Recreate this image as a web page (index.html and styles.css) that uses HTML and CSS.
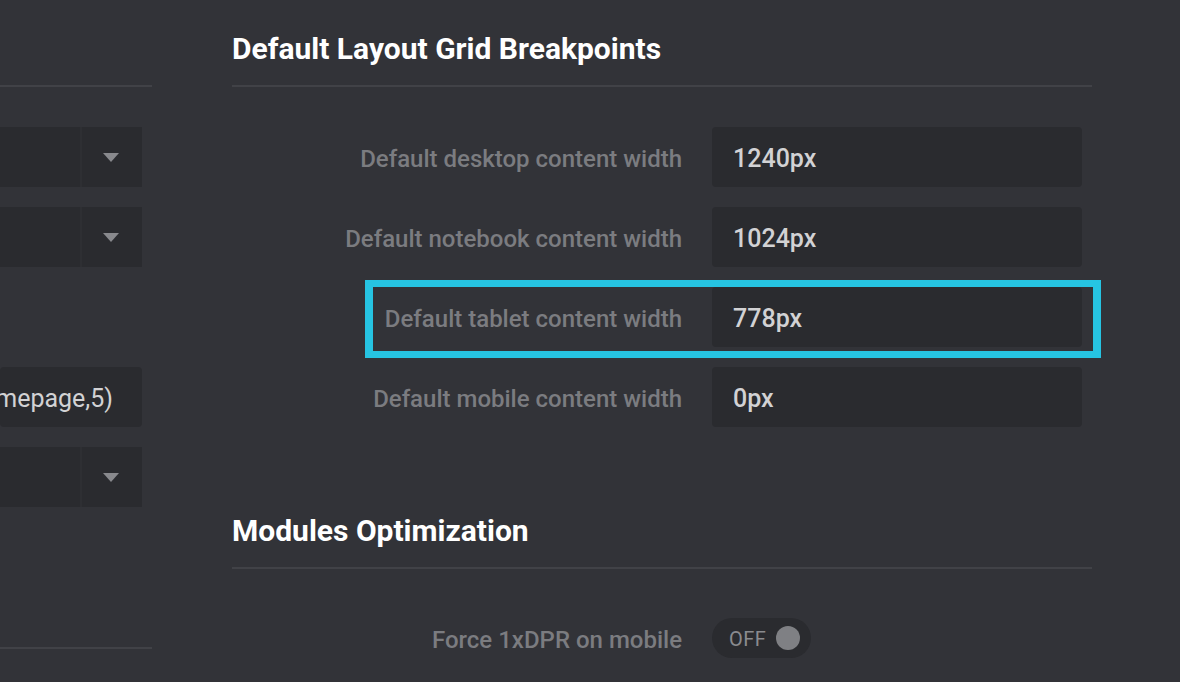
FILE: index.html
```html
<!DOCTYPE html>
<html>
<head>
<meta charset="utf-8">
<link rel="stylesheet" href="styles.css">
</head>
<body>
<div class="page">
  <aside class="side">
    <div class="side-head"></div>
    <div class="side-rows">
      <div class="select"><div class="select-value"></div><div class="select-arrow"><span class="tri"></span></div></div>
      <div class="select"><div class="select-value"></div><div class="select-arrow"><span class="tri"></span></div></div>
      <div class="spacer"></div>
      <div class="field"><span>mepage,5)</span></div>
      <div class="select"><div class="select-value"></div><div class="select-arrow"><span class="tri"></span></div></div>
    </div>
    <div class="side-foot"></div>
  </aside>
  <main class="main">
    <section class="section">
      <h2 class="section-title">Default Layout Grid Breakpoints</h2>
      <div class="rows">
        <div class="row"><label class="label">Default desktop content width</label><div class="input">1240px</div></div>
        <div class="row"><label class="label">Default notebook content width</label><div class="input">1024px</div></div>
        <div class="row row-hl"><label class="label">Default tablet content width</label><div class="input">778px</div><div class="highlight"></div></div>
        <div class="row"><label class="label">Default mobile content width</label><div class="input">0px</div></div>
      </div>
    </section>
    <section class="section section-2">
      <h2 class="section-title">Modules Optimization</h2>
      <div class="rows">
        <div class="row"><label class="label">Force 1xDPR on mobile</label><div class="toggle"><span class="toggle-text">OFF</span><span class="knob"></span></div></div>
      </div>
    </section>
  </main>
</div>
</body>
</html>
```
FILE: styles.css
```css
html, body {
  margin: 0;
  padding: 0;
  background: #323338;
  font-family: Roboto, "Liberation Sans", sans-serif;
  overflow: hidden;
}
.page {
  display: flex;
  gap: 80px;
  width: 1180px;
  height: 682px;
}
.side {
  width: 152px;
  flex: none;
  overflow: hidden;
}
.side-head {
  height: 85px;
  border-bottom: 2px solid #414247;
}
.side-rows {
  display: flex;
  flex-direction: column;
  gap: 20px;
  padding-top: 40px;
  width: 142px;
}
.select {
  height: 60px;
  display: flex;
  gap: 2px;
  background: #2e2f33;
}
.select-value {
  flex: 1;
  background: #2a2b2f;
}
.select-arrow {
  width: 60px;
  background: #2a2b2f;
  display: flex;
  align-items: center;
  justify-content: center;
}
.tri {
  width: 0;
  height: 0;
  border-left: 8px solid transparent;
  border-right: 8px solid transparent;
  border-top: 9px solid #88898d;
  margin-left: -2px;
}
.spacer {
  height: 60px;
}
.field {
  height: 60px;
  box-sizing: border-box;
  padding-top: 2px;
  background: #2a2b2f;
  border-radius: 4px;
  display: flex;
  align-items: center;
  justify-content: flex-end;
  padding-right: 29px;
  overflow: hidden;
  white-space: nowrap;
  font-size: 25px;
  color: #d2d2d4;
}
.side-foot {
  margin-top: 140px;
  height: 0;
  border-bottom: 2px solid #414247;
}
.main {
  width: 860px;
  flex: none;
}
.section-title {
  margin: 0;
  box-sizing: border-box;
  height: 87px;
  padding-top: 32px;
  font-size: 30px;
  line-height: 34px;
  font-weight: 700;
  color: #ffffff;
  border-bottom: 2px solid #414247;
}
.rows {
  display: flex;
  flex-direction: column;
  gap: 20px;
  padding-top: 40px;
}
.section-2 {
  margin-top: 55px;
}
.section-2 .rows {
  padding-top: 39px;
}
.row {
  display: flex;
  align-items: center;
  gap: 30px;
  height: 60px;
  position: relative;
}
.label {
  width: 450px;
  padding-top: 3px;
  text-align: right;
  font-size: 24px;
  font-weight: 500;
  color: #7b7c80;
}
.input {
  width: 370px;
  height: 60px;
  box-sizing: border-box;
  padding-left: 21px;
  padding-top: 2px;
  display: flex;
  align-items: center;
  background: #2a2b2f;
  border-radius: 4px;
  font-size: 25px;
  font-weight: 500;
  color: #d2d2d4;
}
.highlight {
  position: absolute;
  left: 133px;
  top: -7px;
  width: 736px;
  height: 78px;
  box-sizing: border-box;
  border: 7px solid #26c4e2;
  border-left-width: 8px;
  border-right-width: 8px;
  pointer-events: none;
}
.toggle {
  width: 99px;
  height: 40px;
  border-radius: 20px;
  background: #2a2b2f;
  display: flex;
  align-items: center;
  box-sizing: border-box;
  padding-left: 17px;
  gap: 10px;
}
.toggle-text {
  font-size: 20px;
  padding-top: 2px;
  color: #8a8b8f;
  letter-spacing: 0.5px;
}
.knob {
  width: 24px;
  height: 24px;
  border-radius: 50%;
  background: #7f8084;
}
```
